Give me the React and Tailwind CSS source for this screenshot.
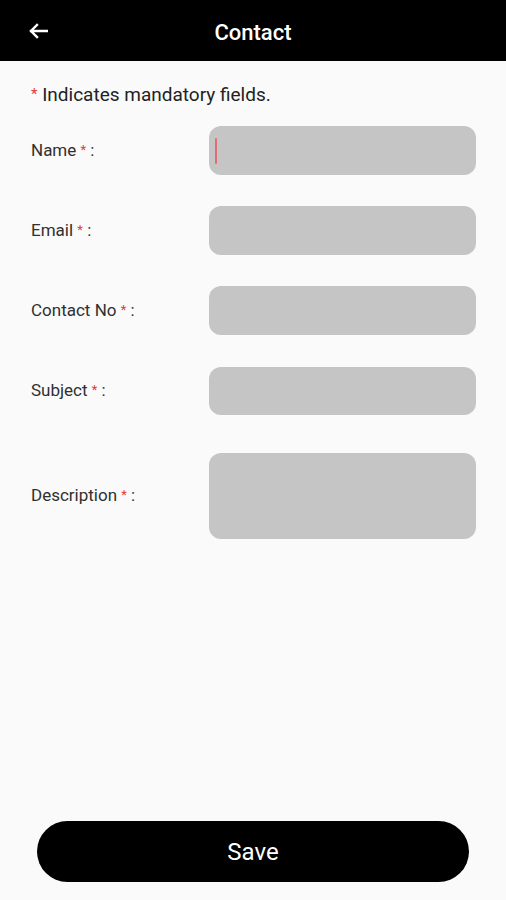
import React from 'react';

const font = { fontFamily: 'Roboto, "Noto Sans", sans-serif' };

const fields = [
  { label: 'Name', h: 'h-[49px]', focus: true },
  { label: 'Email', h: 'h-[49px]' },
  { label: 'Contact No', h: 'h-[49px]' },
  { label: 'Subject', h: 'h-[48px]', gap: 'mt-[32px]' },
  { label: 'Description', h: 'h-[86px]', gap: 'mt-[38px]' },
];

function BackArrow() {
  return (
    <svg width="19" height="16" viewBox="0 0 19 16" fill="none">
      <path d="M2 8H18M8 2L2 8L8 14" stroke="white" strokeWidth="2.4" strokeLinecap="square" />
    </svg>
  );
}

function Star() {
  return <span className="text-[#e53935] text-[13px] relative -top-[2px]">*</span>;
}

export default function App() {
  return (
    <div className="w-[506px] h-[900px] bg-[#fafafa] flex flex-col" style={font}>
      {/* Header */}
      <div className="h-[61px] bg-black relative flex items-center justify-center shrink-0">
        <button className="absolute left-[29px] top-[23px]">
          <BackArrow />
        </button>
        <span className="text-white text-[22px] font-medium pt-[3px]">Contact</span>
      </div>

      <div className="pl-[31px] pr-[30px] pt-[21px]">
        <p className="text-[19px] text-[#222] leading-[26px]">
          <span className="text-[#e53935] text-[15px] relative -top-[2px]">*</span> Indicates mandatory fields.
        </p>

        <div className="flex flex-col mt-[17px]">
          {fields.map((f, i) => (
            <div key={i} className={`flex items-center ${i === 0 ? '' : f.gap || 'mt-[31px]'}`}>
              <label className="w-[178px] shrink-0 text-[17px] text-[#303030]">
                {f.label} <Star /> :
              </label>
              <div className={`w-[267px] shrink-0 ${f.h} bg-[#c6c5c5] rounded-[12px] flex items-center px-[6px]`}>
                {f.focus && <span className="block w-[2px] h-[26px] bg-[#e06c78] rounded" />}
              </div>
            </div>
          ))}
        </div>
      </div>

      <div className="flex-1" />

      <div className="px-[37px] pb-[18px]">
        <button className="w-full h-[61px] bg-black rounded-full text-white text-[24px]">Save</button>
      </div>
    </div>
  );
}
